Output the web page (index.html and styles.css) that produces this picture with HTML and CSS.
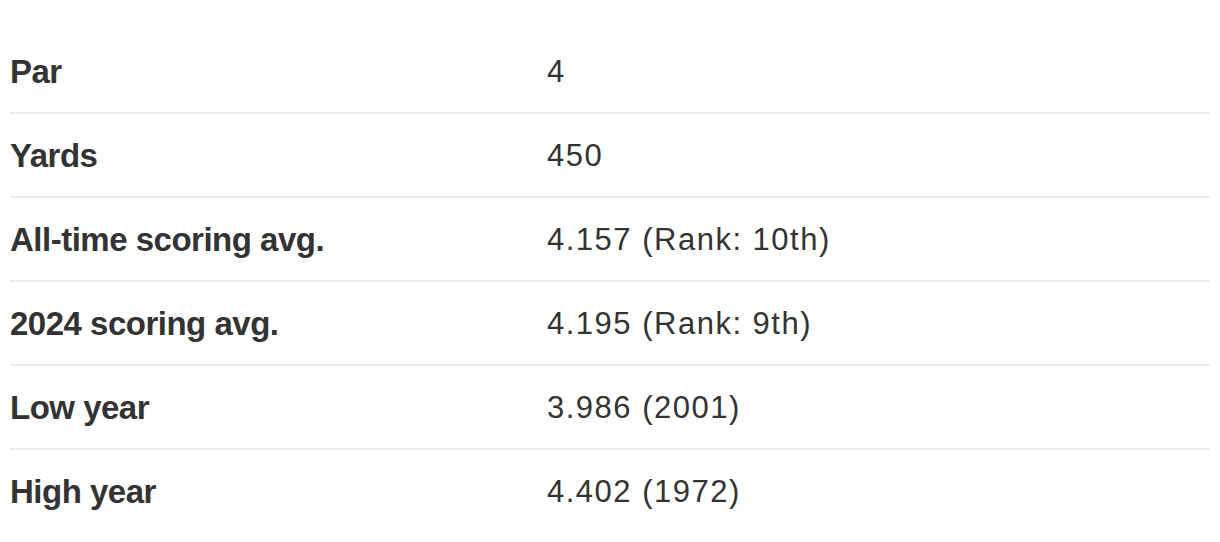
FILE: index.html
```html
<!DOCTYPE html>
<html lang="en">
<head>
<meta charset="utf-8">
<title>Hole stats</title>
<link rel="stylesheet" href="styles.css">
</head>
<body>
<div class="stats">
  <div class="row"><div class="label">Par</div><div class="value">4</div></div>
  <div class="row"><div class="label">Yards</div><div class="value">450</div></div>
  <div class="row"><div class="label">All-time scoring avg.</div><div class="value">4.157 (Rank: 10th)</div></div>
  <div class="row"><div class="label">2024 scoring avg.</div><div class="value">4.195 (Rank: 9th)</div></div>
  <div class="row"><div class="label">Low year</div><div class="value">3.986 (2001)</div></div>
  <div class="row"><div class="label">High year</div><div class="value">4.402 (1972)</div></div>
</div>
</body>
</html>
```
FILE: styles.css
```css
html, body {
  margin: 0;
  padding: 0;
  background: #ffffff;
}
body {
  font-family: "Liberation Sans", Arial, sans-serif;
  color: #333333;
}
.stats {
  padding: 30px 10px 0 10px;
  display: flex;
  flex-direction: column;
}
.row {
  display: grid;
  grid-template-columns: 537px 1fr;
  align-items: center;
  height: 82px;
  border-bottom: 2px solid #ebebeb;
}
.row:last-child {
  border-bottom: none;
}
.label {
  font-weight: 700;
  font-size: 33px;
  letter-spacing: -0.5px;
  line-height: 1;
}
.value {
  font-weight: 400;
  font-size: 31px;
  letter-spacing: 1.5px;
  line-height: 1;
}
```
